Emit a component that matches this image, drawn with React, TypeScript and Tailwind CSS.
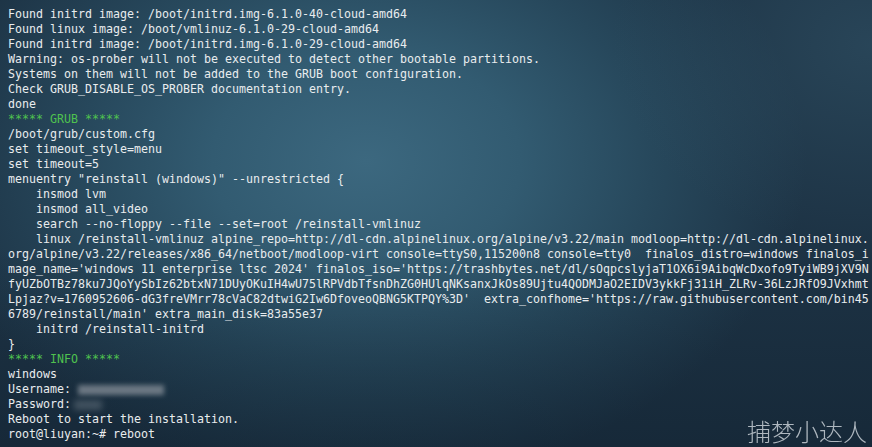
import React from "react";

const W = "#e9ecee";
const G = "#4fc24f";

type Line = { t: string; c?: string };

const lines: Line[] = [
  { t: "Found initrd image: /boot/initrd.img-6.1.0-40-cloud-amd64" },
  { t: "Found linux image: /boot/vmlinuz-6.1.0-29-cloud-amd64" },
  { t: "Found initrd image: /boot/initrd.img-6.1.0-29-cloud-amd64" },
  { t: "Warning: os-prober will not be executed to detect other bootable partitions." },
  { t: "Systems on them will not be added to the GRUB boot configuration." },
  { t: "Check GRUB_DISABLE_OS_PROBER documentation entry." },
  { t: "done" },
  { t: "***** GRUB *****", c: G },
  { t: "/boot/grub/custom.cfg" },
  { t: "set timeout_style=menu" },
  { t: "set timeout=5" },
  { t: 'menuentry "reinstall (windows)" --unrestricted {' },
  { t: "    insmod lvm" },
  { t: "    insmod all_video" },
  { t: "    search --no-floppy --file --set=root /reinstall-vmlinuz" },
  { t: "    linux /reinstall-vmlinuz alpine_repo=http://dl-cdn.alpinelinux.org/alpine/v3.22/main modloop=http://dl-cdn.alpinelinux." },
  { t: "org/alpine/v3.22/releases/x86_64/netboot/modloop-virt console=ttyS0,115200n8 console=tty0  finalos_distro=windows finalos_i" },
  { t: "mage_name='windows 11 enterprise ltsc 2024' finalos_iso='https://trashbytes.net/dl/sOqpcslyjaT1OX6i9AibqWcDxofo9TyiWB9jXV9N" },
  { t: "fyUZbOTBz78ku7JQoYySbIz62btxN71DUyOKuIH4wU75lRPVdbTfsnDhZG0HUlqNKsanxJkOs89Ujtu4QODMJaO2EIDV3ykkFj31iH_ZLRv-36LzJRfO9JVxhmt" },
  { t: "Lpjaz?v=1760952606-dG3freVMrr78cVaC82dtwiG2Iw6DfoveoQBNG5KTPQY%3D'  extra_confhome='https://raw.githubusercontent.com/bin45" },
  { t: "6789/reinstall/main' extra_main_disk=83a55e37" },
  { t: "    initrd /reinstall-initrd" },
  { t: "}" },
  { t: "***** INFO *****", c: G },
  { t: "windows" },
];

export default function App() {
  return (
    <div className="relative w-[872px] h-[447px] overflow-hidden bg-[#1d3345]">
      <div className="absolute inset-0 bg-[radial-gradient(ellipse_440px_320px_at_42%_36%,#3c687f_0%,#325b71_35%,#27485c_65%,rgba(29,51,69,0)_100%)]" />
      <div className="absolute inset-0 bg-[radial-gradient(ellipse_260px_200px_at_100%_10%,rgba(50,84,104,0.55)_0%,rgba(29,51,69,0)_100%)]" />
      <div className="absolute inset-0 bg-[linear-gradient(180deg,rgba(0,0,0,0)_55%,rgba(10,22,34,0.35)_100%)]" />
      <div
        className="relative pt-[7px] pl-[8px] text-[11.63px] leading-[15px] whitespace-pre"
        style={{ fontFamily: '"DejaVu Sans Mono", "Liberation Mono", monospace', color: W }}
      >
        {lines.map((l, i) => (
          <div key={i} className="h-[15px]" style={l.c ? { color: l.c } : undefined}>
            {l.t}
          </div>
        ))}
        <div className="h-[15px] flex items-center">
          <span>Username: </span>
          <span className="inline-block w-[86px] h-[10px] bg-[#808a94] blur-[2.5px] opacity-80" />
        </div>
        <div className="h-[15px] flex items-center">
          <span>Password: </span>
          <span className="inline-block w-[28px] h-[10px] bg-[#5d6c78] blur-[3px] opacity-60 -ml-[4px]" />
        </div>
        <div className="h-[15px]">Reboot to start the installation.</div>
        <div className="h-[15px]">root@liuyan:~# reboot</div>
      </div>
      <div
        className="absolute right-[5px] bottom-[2px] text-[24px] leading-[28px] font-light text-[#d4dbe1] opacity-80"
        style={{ fontFamily: '"Noto Sans CJK SC", "Noto Sans", sans-serif' }}
      >
        捕梦小达人
      </div>
    </div>
  );
}
